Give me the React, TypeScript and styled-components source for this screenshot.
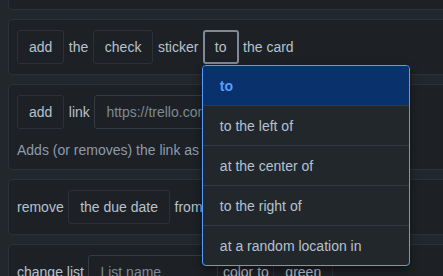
import React, { useLayoutEffect, useRef } from "react";
import styled, { createGlobalStyle } from "styled-components";

const GlobalStyle = createGlobalStyle`
  html, body {
    margin: 0;
    padding: 0;
    background: #22272b;
    overflow: hidden;
  }
  body {
    font-family: "Liberation Sans", Arial, Helvetica, sans-serif;
    font-size: 14px;
    color: #b6c2cf;
  }
  * { box-sizing: border-box; }
`;

const Viewport = styled.div`
  width: 443px;
  height: 276px;
  overflow: hidden;
`;

const List = styled.div`
  display: flex;
  flex-direction: column;
  gap: 9px;
  padding: 0 0 40px 8px;
  width: 700px;
`;

const Card = styled.div`
  background: #1d2125;
  border: 1px solid #2c3137;
  border-radius: 4px;
  padding: 10px 8px;
  display: flex;
  flex-direction: column;
  gap: 11px;
`;

const HintCard = styled(Card)`
  padding-bottom: 9px;
`;

const Row = styled.div`
  display: flex;
  align-items: center;
  gap: 4.5px;
  height: 34px;
  white-space: nowrap;
`;

const Word = styled.span`
  line-height: 20px;
  color: #b6c2cf;
`;

const Anchor = styled.div`
  position: relative;
  display: flex;
`;

const Select = styled.button<{ $open?: boolean }>`
  height: 34px;
  padding: 0 ${(p) => (p.$open ? 10 : 11)}px;
  border-radius: 3px;
  background: #1d2125;
  border: ${(p) => (p.$open ? "2px solid #808a95" : "1px solid #2c3137")};
  color: #b6c2cf;
  font: inherit;
  font-size: 14px;
  cursor: pointer;
`;

const Input = styled.input<{ $w: number }>`
  width: ${(p) => p.$w}px;
  height: 34px;
  padding: 0 11px;
  border-radius: 3px;
  background: #1d2125;
  border: 1px solid #353b42;
  color: #b6c2cf;
  font: inherit;
  font-size: 14px;
  outline: none;
  &::placeholder {
    color: #7e8a96;
  }
`;

const Hint = styled.div`
  line-height: 20px;
  color: #8c9bab;
  white-space: nowrap;
`;

const Menu = styled.ul`
  position: absolute;
  top: 35px;
  left: -1px;
  width: 208px;
  margin: 0;
  padding: 0;
  list-style: none;
  background: #22272b;
  border: 1px solid #579dff;
  border-radius: 4px;
  overflow: hidden;
  box-shadow: 0 4px 10px rgba(0, 0, 0, 0.45);
  z-index: 10;
`;

const Option = styled.li<{ $selected?: boolean }>`
  box-sizing: content-box;
  height: 39px;
  display: flex;
  align-items: center;
  padding: 0 17px;
  font-size: 14px;
  white-space: nowrap;
  background: ${(p) => (p.$selected ? "#09326c" : "transparent")};
  color: ${(p) => (p.$selected ? "#579dff" : "#b6c2cf")};
  font-weight: ${(p) => (p.$selected ? 700 : 400)};
  & + & {
    border-top: 1px solid #353a40;
  }
`;

const options = [
  "to",
  "to the left of",
  "at the center of",
  "to the right of",
  "at a random location in",
];

export default function App() {
  const ref = useRef<HTMLDivElement>(null);
  useLayoutEffect(() => {
    if (ref.current) ref.current.scrollTop = 46;
  }, []);

  return (
    <>
      <GlobalStyle />
      <Viewport ref={ref}>
        <List>
          <Card>
            <Row>
              <Select>add</Select>
              <Word>a checklist named</Word>
              <Input $w={180} placeholder="Checklist" />
            </Row>
          </Card>

          <Card>
            <Row>
              <Select>add</Select>
              <Word>the</Word>
              <Select>check</Select>
              <Word>sticker</Word>
              <Anchor>
                <Select $open>to</Select>
                <Menu>
                  {options.map((o, i) => (
                    <Option key={o} $selected={i === 0}>
                      {o}
                    </Option>
                  ))}
                </Menu>
              </Anchor>
              <Word>the card</Word>
            </Row>
          </Card>

          <HintCard>
            <Row>
              <Select>add</Select>
              <Word>link</Word>
              <Input $w={220} placeholder="https://trello.com/c/..." />
              <Word>to the card</Word>
            </Row>
            <Hint>Adds (or removes) the link as an attachment to the card</Hint>
          </HintCard>

          <Card>
            <Row>
              <Word>remove</Word>
              <Select>the due date</Select>
              <Word>from the card</Word>
            </Row>
          </Card>

          <Card>
            <Row>
              <Word>change list</Word>
              <Input $w={130} placeholder="List name" />
              <Word>color to</Word>
              <Select>green</Select>
            </Row>
          </Card>
        </List>
      </Viewport>
    </>
  );
}
